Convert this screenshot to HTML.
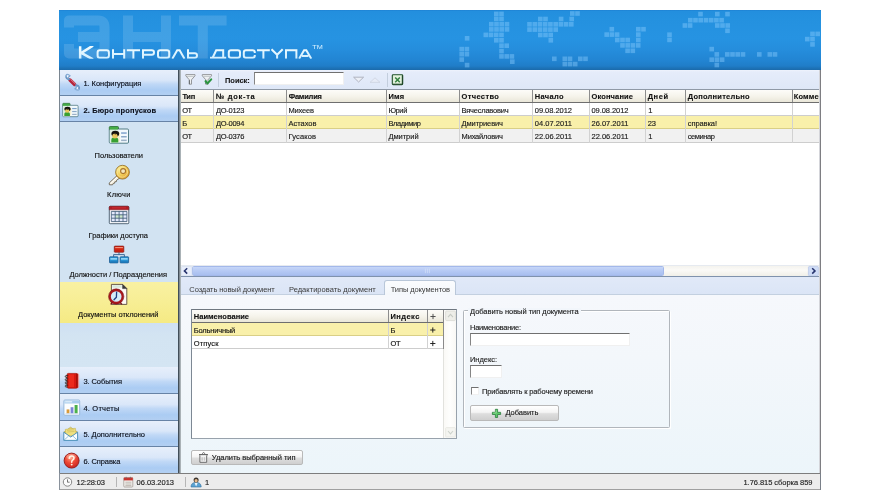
<!DOCTYPE html>
<html lang="ru">
<head>
<meta charset="utf-8">
<title>Контроль доступа</title>
<style>
html,body{margin:0;padding:0;background:#fff;}
body{width:880px;height:500px;overflow:hidden;position:relative;font-family:"Liberation Sans",sans-serif;font-size:7.4px;color:#111;}
.abs{position:absolute;}
#app{position:absolute;left:59px;top:10px;width:762px;height:480px;background:#eef4fb;overflow:hidden;filter:blur(0.4px);}
#hdr{position:absolute;left:0;top:0;width:762px;height:60px;background:linear-gradient(#1e82d3 0px,#238fde 1.5px,#2491df 8px,#2693e2 28px,#258ddc 40px,#2285d3 50px,#207dc8 56px,#1d73b8 58px,#1b6aab 60px);}
#side{position:absolute;left:0;top:60px;width:119px;height:404px;background:#d2e3f2;border-right:1px solid #414e59;}
.nav{position:absolute;left:0;width:119px;height:27px;background:linear-gradient(#e7effb 0%,#dae7f9 40%,#c0d8f6 56%,#abccf3 80%,#b2cff2 100%);border-bottom:1px solid #6783a6;box-sizing:border-box;}
.t{position:absolute;white-space:nowrap;line-height:10px;height:10px;-webkit-text-stroke:0.14px currentColor;}
.b{font-weight:bold;-webkit-text-stroke:0.12px currentColor;}
.c{text-align:center;}
#main{position:absolute;left:120px;top:60px;width:642px;height:404px;background:#fff;border-left:1px solid #808a92;box-sizing:border-box;overflow:hidden;}
#tb{position:absolute;left:0;top:0;width:641px;height:20px;background:linear-gradient(#eef3fc 0,#e5ecfa 2px,#dee7f7 100%);}
#ghead{position:absolute;left:0;top:19px;width:641px;height:14px;background:linear-gradient(#fdfcf9,#f5f3ea 55%,#e9e6d8);border-top:1px solid #8f99a6;border-bottom:1px solid #6e6e6e;box-sizing:border-box;}
.row{position:absolute;left:0;width:641px;border-bottom:1px solid #cfcfcf;box-sizing:border-box;}
.vs{position:absolute;width:1px;background:#d2d2d2;}
.vh{position:absolute;width:1px;background:#8d8d8d;}
#status{position:absolute;left:0;top:463px;width:762px;height:17px;background:#ececec;border-top:1px solid #7d7d7d;border-bottom:1px solid #a0a0a0;box-sizing:border-box;}
.btn{position:absolute;box-sizing:border-box;border:1px solid #b9b9b9;border-radius:2px;background:linear-gradient(#ffffff,#f4f4f4 45%,#dedede 55%,#cfcfcf);}
.inp{position:absolute;box-sizing:border-box;background:#fff;border:1px solid #f0f0f0;border-top:1.5px solid #707070;border-left:1px solid #858585;}
</style>
</head>
<body>
<div id="app">
<div id="hdr">
<svg class="abs" style="left:0;top:0" width="762" height="60" viewBox="0 0 762 60">
<g stroke="#ffffff" opacity="0.13" stroke-width="10" fill="none" stroke-linejoin="round" stroke-linecap="butt">
<path d="M10,17.5 L10,10.4 L39,10.4 Q45.5,10.4 45.5,17 L45.5,37 Q45.5,43.4 39,43.4 L10,43.4 L10,34"/>
<path d="M19,27 L45,27"/>
<path d="M69,5.4 L69,48.4 M107,5.4 L107,48.4 M69,27 L107,27"/>
<path d="M120,10.4 L167.6,10.4 M143.8,10.4 L143.8,48.4"/>
</g>
<g fill="#8fd0ff" fill-opacity="0.42">
<rect x="405.8" y="26.0" width="4.6" height="4.6"/>
<rect x="400.4" y="36.8" width="4.6" height="4.6"/>
<rect x="405.6" y="36.8" width="4.6" height="4.6"/>
<rect x="400.4" y="41.9" width="4.6" height="4.6"/>
<rect x="405.6" y="41.9" width="4.6" height="4.6"/>
<rect x="400.4" y="47.3" width="4.6" height="4.6"/>
<rect x="405.8" y="52.8" width="4.6" height="4.6"/>
<rect x="435.0" y="1.6" width="4.6" height="4.6"/>
<rect x="440.2" y="1.6" width="4.6" height="4.6"/>
<rect x="435.0" y="6.6" width="4.6" height="4.6"/>
<rect x="440.2" y="6.6" width="4.6" height="4.6"/>
<rect x="430.0" y="11.9" width="4.6" height="4.6"/>
<rect x="435.2" y="11.9" width="4.6" height="4.6"/>
<rect x="440.4" y="11.9" width="4.6" height="4.6"/>
<rect x="445.7" y="11.9" width="4.6" height="4.6"/>
<rect x="430.0" y="17.1" width="4.6" height="4.6"/>
<rect x="435.2" y="17.1" width="4.6" height="4.6"/>
<rect x="440.4" y="17.1" width="4.6" height="4.6"/>
<rect x="445.7" y="17.1" width="4.6" height="4.6"/>
<rect x="424.5" y="22.6" width="4.6" height="4.6"/>
<rect x="429.7" y="22.6" width="4.6" height="4.6"/>
<rect x="434.9" y="22.6" width="4.6" height="4.6"/>
<rect x="440.2" y="22.6" width="4.6" height="4.6"/>
<rect x="435.0" y="28.0" width="4.6" height="4.6"/>
<rect x="440.2" y="28.0" width="4.6" height="4.6"/>
<rect x="440.2" y="33.4" width="4.6" height="4.6"/>
<rect x="445.4" y="33.4" width="4.6" height="4.6"/>
<rect x="440.2" y="38.8" width="4.6" height="4.6"/>
<rect x="440.2" y="44.1" width="4.6" height="4.6"/>
<rect x="445.4" y="44.1" width="4.6" height="4.6"/>
<rect x="450.6" y="44.1" width="4.6" height="4.6"/>
<rect x="451.0" y="49.4" width="4.6" height="4.6"/>
<rect x="511.0" y="1.2" width="4.6" height="4.6"/>
<rect x="516.2" y="1.2" width="4.6" height="4.6"/>
<rect x="479.0" y="6.7" width="4.6" height="4.6"/>
<rect x="484.2" y="6.7" width="4.6" height="4.6"/>
<rect x="499.8" y="6.7" width="4.6" height="4.6"/>
<rect x="510.4" y="6.7" width="4.6" height="4.6"/>
<rect x="468.2" y="12.0" width="4.6" height="4.6"/>
<rect x="473.5" y="12.0" width="4.6" height="4.6"/>
<rect x="478.7" y="12.0" width="4.6" height="4.6"/>
<rect x="483.9" y="12.0" width="4.6" height="4.6"/>
<rect x="489.1" y="12.0" width="4.6" height="4.6"/>
<rect x="494.4" y="12.0" width="4.6" height="4.6"/>
<rect x="499.6" y="12.0" width="4.6" height="4.6"/>
<rect x="504.8" y="12.0" width="4.6" height="4.6"/>
<rect x="510.0" y="12.0" width="4.6" height="4.6"/>
<rect x="468.2" y="17.3" width="4.6" height="4.6"/>
<rect x="473.5" y="17.3" width="4.6" height="4.6"/>
<rect x="478.7" y="17.3" width="4.6" height="4.6"/>
<rect x="483.9" y="17.3" width="4.6" height="4.6"/>
<rect x="489.1" y="17.3" width="4.6" height="4.6"/>
<rect x="494.4" y="17.3" width="4.6" height="4.6"/>
<rect x="479.0" y="22.7" width="4.6" height="4.6"/>
<rect x="484.2" y="22.7" width="4.6" height="4.6"/>
<rect x="489.4" y="22.7" width="4.6" height="4.6"/>
<rect x="489.5" y="28.0" width="4.6" height="4.6"/>
<rect x="493.0" y="46.5" width="4.6" height="4.6"/>
<rect x="503.5" y="46.5" width="4.6" height="4.6"/>
<rect x="508.7" y="46.5" width="4.6" height="4.6"/>
<rect x="519.0" y="46.5" width="4.6" height="4.6"/>
<rect x="524.2" y="46.5" width="4.6" height="4.6"/>
<rect x="503.5" y="51.8" width="4.6" height="4.6"/>
<rect x="508.7" y="51.8" width="4.6" height="4.6"/>
<rect x="513.9" y="51.8" width="4.6" height="4.6"/>
<rect x="550.5" y="16.9" width="4.6" height="4.6"/>
<rect x="577.0" y="16.9" width="4.6" height="4.6"/>
<rect x="582.2" y="16.9" width="4.6" height="4.6"/>
<rect x="545.4" y="22.3" width="4.6" height="4.6"/>
<rect x="550.6" y="22.3" width="4.6" height="4.6"/>
<rect x="555.8" y="22.3" width="4.6" height="4.6"/>
<rect x="577.0" y="22.3" width="4.6" height="4.6"/>
<rect x="556.0" y="27.7" width="4.6" height="4.6"/>
<rect x="561.2" y="27.7" width="4.6" height="4.6"/>
<rect x="566.4" y="27.7" width="4.6" height="4.6"/>
<rect x="577.0" y="27.7" width="4.6" height="4.6"/>
<rect x="561.2" y="33.1" width="4.6" height="4.6"/>
<rect x="566.4" y="33.1" width="4.6" height="4.6"/>
<rect x="571.6" y="33.1" width="4.6" height="4.6"/>
<rect x="576.9" y="33.1" width="4.6" height="4.6"/>
<rect x="566.3" y="38.5" width="4.6" height="4.6"/>
<rect x="571.5" y="38.5" width="4.6" height="4.6"/>
<rect x="608.2" y="22.4" width="4.6" height="4.6"/>
<rect x="608.2" y="27.6" width="4.6" height="4.6"/>
<rect x="639.2" y="1.8" width="4.6" height="4.6"/>
<rect x="656.0" y="1.8" width="4.6" height="4.6"/>
<rect x="666.2" y="1.8" width="4.6" height="4.6"/>
<rect x="629.0" y="7.9" width="4.6" height="4.6"/>
<rect x="634.2" y="7.9" width="4.6" height="4.6"/>
<rect x="639.4" y="7.9" width="4.6" height="4.6"/>
<rect x="644.7" y="7.9" width="4.6" height="4.6"/>
<rect x="649.9" y="7.9" width="4.6" height="4.6"/>
<rect x="655.1" y="7.9" width="4.6" height="4.6"/>
<rect x="660.3" y="7.9" width="4.6" height="4.6"/>
<rect x="623.6" y="13.2" width="4.6" height="4.6"/>
<rect x="628.8" y="13.2" width="4.6" height="4.6"/>
<rect x="656.0" y="13.2" width="4.6" height="4.6"/>
<rect x="661.2" y="13.2" width="4.6" height="4.6"/>
<rect x="666.4" y="13.2" width="4.6" height="4.6"/>
<rect x="666.2" y="18.5" width="4.6" height="4.6"/>
<rect x="650.4" y="36.8" width="4.6" height="4.6"/>
<rect x="655.5" y="42.1" width="4.6" height="4.6"/>
<rect x="666.0" y="42.1" width="4.6" height="4.6"/>
<rect x="671.2" y="42.1" width="4.6" height="4.6"/>
<rect x="676.4" y="42.1" width="4.6" height="4.6"/>
<rect x="681.7" y="42.1" width="4.6" height="4.6"/>
<rect x="698.0" y="42.1" width="4.6" height="4.6"/>
<rect x="708.5" y="42.1" width="4.6" height="4.6"/>
<rect x="713.7" y="42.1" width="4.6" height="4.6"/>
<rect x="650.4" y="47.4" width="4.6" height="4.6"/>
<rect x="655.6" y="47.4" width="4.6" height="4.6"/>
<rect x="660.8" y="47.4" width="4.6" height="4.6"/>
<rect x="655.5" y="52.7" width="4.6" height="4.6"/>
<rect x="751.2" y="21.6" width="4.6" height="4.6"/>
<rect x="756.4" y="21.6" width="4.6" height="4.6"/>
<rect x="746.0" y="26.8" width="4.6" height="4.6"/>
<rect x="751.2" y="26.8" width="4.6" height="4.6"/>
<rect x="751.2" y="32.1" width="4.6" height="4.6"/>
</g>
<defs><linearGradient id="tg" x1="0" y1="36" x2="0" y2="49" gradientUnits="userSpaceOnUse"><stop offset="0" stop-color="#f4fdff"/><stop offset="1" stop-color="#cfeeff"/></linearGradient></defs>
<clipPath id="tc"><rect x="0" y="36.1" width="340" height="12.75"/></clipPath>
<g fill="none" stroke="url(#tg)" stroke-linejoin="miter" stroke-linecap="butt" clip-path="url(#tc)">
<path stroke-width="2.5" d="M21.15,36.20 L21.15,48.80 M33.95,35.60 L22.35,42.90 L33.95,49.40"/>
<path stroke-width="2.0" d="M40.80,40.20 L47.70,40.20 Q49.90,40.20 49.90,42.40 L49.90,45.60 Q49.90,47.80 47.70,47.80 L40.80,47.80 Q38.60,47.80 38.60,45.60 L38.60,42.40 Q38.60,40.20 40.80,40.20 Z"/>
<path stroke-width="2.0" d="M54.00,39.20 L54.00,48.80 M65.20,39.20 L65.20,48.80 M54.00,44.00 L65.20,44.00"/>
<path stroke-width="2.0" d="M67.80,40.20 L81.00,40.20 M74.40,40.20 L74.40,48.80"/>
<path stroke-width="2.0" d="M84.00,48.80 L84.00,40.20 L92.80,40.20 Q95.00,40.20 95.00,42.40 L95.00,42.60 Q95.00,44.80 92.80,44.80 L84.00,44.80"/>
<path stroke-width="2.0" d="M101.20,40.20 L108.00,40.20 Q110.20,40.20 110.20,42.40 L110.20,45.60 Q110.20,47.80 108.00,47.80 L101.20,47.80 Q99.00,47.80 99.00,45.60 L99.00,42.40 Q99.00,40.20 101.20,40.20 Z"/>
<path stroke-width="2.0" d="M113.30,48.80 L118.20,40.20 L120.60,40.20 L125.50,48.80"/>
<path stroke-width="2.0" d="M129.00,39.20 L129.00,47.80 L135.80,47.80 Q138.00,47.80 138.00,45.60 L138.00,45.40 Q138.00,43.20 135.80,43.20 L129.00,43.20"/>
<path stroke-width="2.0" d="M151.00,47.80 L167.20,47.80 M153.60,47.80 L157.20,40.20 L164.20,40.20 L164.20,47.80"/>
<path stroke-width="2.0" d="M172.00,40.20 L178.80,40.20 Q181.00,40.20 181.00,42.40 L181.00,45.60 Q181.00,47.80 178.80,47.80 L172.00,47.80 Q169.80,47.80 169.80,45.60 L169.80,42.40 Q169.80,40.20 172.00,40.20 Z"/>
<path stroke-width="2.0" d="M195.80,43.00 L195.80,42.40 Q195.80,40.20 193.60,40.20 L187.00,40.20 Q184.80,40.20 184.80,42.40 L184.80,45.60 Q184.80,47.80 187.00,47.80 L193.60,47.80 Q195.80,47.80 195.80,45.60 L195.80,45.00"/>
<path stroke-width="2.0" d="M198.00,40.20 L210.80,40.20 M204.40,40.20 L204.40,48.80"/>
<path stroke-width="2.0" d="M212.50,39.20 L218.10,44.80 L223.70,39.20 M218.10,44.80 L218.10,48.80"/>
<path stroke-width="2.0" d="M227.00,48.80 L227.00,40.20 L237.40,40.20 L237.40,48.80"/>
<path stroke-width="2.0" d="M240.10,48.80 L245.10,40.20 L247.30,40.20 L252.30,48.80 M243.00,45.90 L249.40,45.90"/>
</g>
<text x="253.2" y="39.2" font-family="Liberation Sans, sans-serif" font-size="5.6" fill="#d8f1ff" textLength="10.5" lengthAdjust="spacingAndGlyphs">TM</text>
</svg>
</div>
<div id="side">
<div class="nav" style="top:0px;height:26px"></div>
<div class="t" style="left:24.40px;top:9px;font-size:7.5px;letter-spacing:-0.046px;color:#0b101c;">1. Конфигурация</div>
<svg class="abs" style="left:3.00px;top:2.00px" width="20" height="20" viewBox="62 72 20 20"><g stroke-linecap="round" fill="none"><path d="M68.6,78.6 L76.4,86.2" stroke="#8db0d6" stroke-width="2.0"/><path d="M70.0,80.0 L74.6,84.4" stroke="#b5243a" stroke-width="3.5"/><path d="M70.8,79.6 L75.2,83.8" stroke="#e58a96" stroke-width="0.9"/><path d="M69.8,75.8 L67.8,77.6 L66.0,75.8 A2.9,2.9 0 0 0 69.4,79.4" stroke="#6694c4" stroke-width="1.3" stroke-linejoin="round"/><path d="M66.4,74.6 A2.9,2.9 0 0 1 69.8,75.8" stroke="#88add6" stroke-width="1.2"/><path d="M75.2,88.8 L77.2,87.0 L79.2,89.0 A2.9,2.9 0 0 0 75.6,85.2" stroke="#6694c4" stroke-width="1.3" stroke-linejoin="round"/><path d="M78.6,90 A2.9,2.9 0 0 1 75.2,88.8" stroke="#88add6" stroke-width="1.2"/><circle cx="67.6" cy="76.6" r="0.9" fill="#f4f8fd" stroke="none"/><circle cx="77.4" cy="88.0" r="0.9" fill="#f4f8fd" stroke="none"/></g></svg>
<div class="nav" style="top:26px;height:26px"></div>
<div class="t b" style="left:24.40px;top:36px;font-size:7.5px;letter-spacing:0.137px;color:#0b101c;">2. Бюро пропусков</div>
<svg class="abs" style="left:1.00px;top:31.00px" width="22" height="18" viewBox="60 101 22 18"><rect x="62.72" y="103.32" width="7.36" height="3.36" fill="#46ac46" rx="0.72" stroke="#2a6e34" stroke-width="0.64"/><rect x="62.72" y="105.32" width="15.36" height="11.36" fill="#f2f9fd" rx="0.88" stroke="#2d5f68" stroke-width="0.64"/><rect x="63.12" y="104.28" width="6.56" height="1.76" fill="#46ac46" /><rect x="63.12" y="105.88" width="6.88" height="10.40" fill="#dfeee0" /><rect x="69.28" y="107.80" width="2.08" height="7.68" fill="#f6efcf" rx="0.96"/><path d="M64.32,116.12 l0,-2.08 q0,-2.08 2.80,-2.08 q2.80,0 2.80,2.08 l0,2.08 z" fill="#38a032"/><ellipse cx="67.52" cy="109.08" rx="3.12" ry="2.32" fill="#15120e"/><ellipse cx="67.20" cy="110.84" rx="2.16" ry="2.00" fill="#e9c65c"/><path d="M65.28,109.80 q1.12,-1.28 2.08,0 q1.04,-1.12 2.24,0.32 l0,-1.28 l-4.32,0 z" fill="#15120e"/><rect x="72.16" y="107.96" width="4.48" height="1.20" fill="#7fa3cc" /><rect x="72.16" y="110.92" width="4.48" height="1.20" fill="#8aa8c8" /><rect x="72.16" y="113.80" width="4.48" height="1.20" fill="#9cb0c6" /></svg>
<div class="nav" style="top:297px;height:27px"></div>
<div class="t" style="left:24.40px;top:307px;font-size:7.5px;letter-spacing:-0.078px;color:#0b101c;">3. События</div>
<svg class="abs" style="left:4.00px;top:301.00px" width="19" height="20" viewBox="63 371 19 20"><rect x="67.4" y="373.4" width="11.8" height="14.8" rx="1.4" fill="#f08c84" opacity="0.75"/><rect x="67.0" y="373.4" width="10.6" height="14.8" rx="1.4" fill="#d81810" stroke="#a01008" stroke-width="0.6"/><rect x="68.6" y="374.4" width="5.4" height="12.8" fill="#f23020" opacity="0.75"/><rect x="76.0" y="373.8" width="1.6" height="14" fill="#a81008"/><path d="M68.2,375.6 L65.8,375.6 A1,1 0 0 0 65.8,377.40000000000003 L67.4,377.40000000000003" stroke="#2a2a2a" stroke-width="0.9" fill="none"/><path d="M68.2,378.8 L65.8,378.8 A1,1 0 0 0 65.8,380.6 L67.4,380.6" stroke="#2a2a2a" stroke-width="0.9" fill="none"/><path d="M68.2,382.0 L65.8,382.0 A1,1 0 0 0 65.8,383.8 L67.4,383.8" stroke="#2a2a2a" stroke-width="0.9" fill="none"/><path d="M68.2,385.2 L65.8,385.2 A1,1 0 0 0 65.8,387.0 L67.4,387.0" stroke="#2a2a2a" stroke-width="0.9" fill="none"/></svg>
<div class="nav" style="top:324px;height:27px"></div>
<div class="t" style="left:24.40px;top:334px;font-size:7.5px;letter-spacing:0.206px;color:#0b101c;">4. Отчеты</div>
<svg class="abs" style="left:3.00px;top:328.00px" width="20" height="20" viewBox="62 398 20 20"><rect x="63.9" y="400" width="15.8" height="15.2" rx="1" fill="#fbfdff" stroke="#8fb2d6" stroke-width="0.9"/><rect x="64.4" y="400.5" width="14.8" height="3" fill="#a9cdee"/><rect x="65.2" y="401.2" width="7" height="1.2" fill="#e4f1fb"/><rect x="66.6" y="409.4" width="2.8" height="4" fill="#d89a3a"/><rect x="70.6" y="407.2" width="2.8" height="6.2" fill="#7a86d8"/><rect x="74.6" y="405" width="3" height="8.4" fill="#4bb04a"/><rect x="65.4" y="413.4" width="13" height="0.7" fill="#c5d5e6"/></svg>
<div class="nav" style="top:351px;height:26px"></div>
<div class="t" style="left:24.40px;top:360px;font-size:7.5px;letter-spacing:-0.047px;color:#0b101c;">5. Дополнительно</div>
<svg class="abs" style="left:3.00px;top:355.00px" width="18" height="18" viewBox="62 425 18 18"><path d="M63.8,432.2 L70.6,427.2 L77.6,432.2 Z" fill="#e9d873" stroke="#b9a84a" stroke-width="0.7" stroke-linejoin="round"/><rect x="65.6" y="428.8" width="10.2" height="7" fill="#efe080" stroke="#c2b050" stroke-width="0.5" transform="rotate(-6 70.7 432)"/><path d="M67,430.4 L74.4,429.8 M67.2,432 L74.6,431.4" stroke="#c9b758" stroke-width="0.6"/><path d="M63.8,432.2 L63.8,440.4 L77.6,440.4 L77.6,432.2 L70.7,437 Z" fill="#fafdff" stroke="#3f88b4" stroke-width="0.9" stroke-linejoin="round"/><path d="M63.8,440.4 L68.8,435.8 M77.6,440.4 L72.6,435.8" stroke="#6aa8cc" stroke-width="0.7"/></svg>
<div class="nav" style="top:377px;height:27px"></div>
<div class="t" style="left:24.40px;top:387px;font-size:7.5px;letter-spacing:-0.089px;color:#0b101c;">6. Справка</div>
<svg class="abs" style="left:3.00px;top:381.00px" width="20" height="20" viewBox="62 451 20 20"><defs><radialGradient id="hg" cx="0.42" cy="0.32" r="0.75"><stop offset="0" stop-color="#ff9a7a"/><stop offset="0.45" stop-color="#ee4a38"/><stop offset="1" stop-color="#c41e1c"/></radialGradient></defs><circle cx="71.6" cy="460.6" r="7.5" fill="url(#hg)" stroke="#8e1a18" stroke-width="0.9"/><ellipse cx="71.4" cy="456.6" rx="5" ry="2.8" fill="#ffffff" opacity="0.22"/><path d="M69.3,458.2 Q69.5,456 71.7,456 Q74,456 74,458 Q74,459.4 72.6,460.2 Q71.7,460.8 71.7,462.2" stroke="#fff4e6" stroke-width="1.5" fill="none" stroke-linecap="round"/><circle cx="71.7" cy="464.6" r="0.95" fill="#fff4e6"/></svg>
<div class="abs" style="left:0;top:212px;width:119px;height:41px;background:linear-gradient(#f9f1a2,#f7ee94 50%,#f5ea84)"></div>
<div class="abs" style="left:0;top:253px;width:119px;height:44px;background:linear-gradient(#cfe0f3,#d3e4f2 30%,#d4e5f3)"></div>
<div class="t" style="left:35.60px;top:81px;font-size:7.5px;letter-spacing:-0.050px;">Пользователи</div>
<svg class="abs" style="left:48.00px;top:54.00px" width="24" height="22" viewBox="107 124 24 22"><rect x="109.30" y="126.50" width="9.20" height="4.20" fill="#46ac46" rx="0.90" stroke="#2a6e34" stroke-width="0.80"/><rect x="109.30" y="129.00" width="19.20" height="14.20" fill="#f2f9fd" rx="1.10" stroke="#2d5f68" stroke-width="0.80"/><rect x="109.80" y="127.70" width="8.20" height="2.20" fill="#46ac46" /><rect x="109.80" y="129.70" width="8.60" height="13.00" fill="#dfeee0" /><rect x="117.50" y="132.10" width="2.60" height="9.60" fill="#f6efcf" rx="1.20"/><path d="M111.30,142.50 l0,-2.60 q0,-2.60 3.50,-2.60 q3.50,0 3.50,2.60 l0,2.60 z" fill="#38a032"/><ellipse cx="115.30" cy="133.70" rx="3.90" ry="2.90" fill="#15120e"/><ellipse cx="114.90" cy="135.90" rx="2.70" ry="2.50" fill="#e9c65c"/><path d="M112.50,134.60 q1.40,-1.60 2.60,0 q1.30,-1.40 2.80,0.40 l0,-1.60 l-5.40,0 z" fill="#15120e"/><rect x="121.10" y="132.30" width="5.60" height="1.50" fill="#7fa3cc" /><rect x="121.10" y="136.00" width="5.60" height="1.50" fill="#8aa8c8" /><rect x="121.10" y="139.60" width="5.60" height="1.50" fill="#9cb0c6" /></svg>
<div class="t" style="left:48.00px;top:120px;font-size:7.5px;letter-spacing:0.275px;">Ключи</div>
<svg class="abs" style="left:47.00px;top:93.00px" width="27" height="25" viewBox="106 163 27 25"><defs><radialGradient id="kg" cx="0.32" cy="0.3" r="0.8"><stop offset="0" stop-color="#fbee96"/><stop offset="0.5" stop-color="#f2cc58"/><stop offset="1" stop-color="#d9962a"/></radialGradient></defs><path d="M117.0,175.6 L109.2,183.0 L109.4,184.8 L112.6,184.8 L113.2,183.4 L114.6,183.2 L114.8,181.8 L116.4,181.6 L116.6,180.2 L120.4,177.6 Z" fill="#f6f1e2" stroke="#5c5240" stroke-width="0.8" stroke-linejoin="round"/><path d="M110.4,183.4 L117.6,176.6" stroke="#ffffff" stroke-width="0.9"/><circle cx="122.5" cy="172.2" r="6.9" fill="url(#kg)" stroke="#8f6c24" stroke-width="0.8"/><circle cx="122.3" cy="172.0" r="5.2" fill="none" stroke="#fbe9a0" stroke-width="1.0" opacity="0.7"/><circle cx="123.1" cy="171.1" r="2.5" fill="#f3e6bd" stroke="#a9752c" stroke-width="1.1"/></svg>
<div class="t" style="left:29.60px;top:161px;font-size:7.5px;letter-spacing:-0.025px;">Графики доступа</div>
<svg class="abs" style="left:48.00px;top:134.00px" width="24" height="22" viewBox="107 204 24 22"><rect x="109.3" y="206.3" width="19.5" height="17.4" rx="0.9" fill="#fdfdff" stroke="#2f4558" stroke-width="0.8"/><path d="M109.3,209.8 L109.3,207.2 Q109.3,206.3 110.2,206.3 L127.9,206.3 Q128.8,206.3 128.8,207.2 L128.8,209.8 Z" fill="#b21c24" stroke="#7e1219" stroke-width="0.5"/><rect x="112" y="207.2" width="14" height="1.2" fill="#cf3038" opacity="0.7"/><rect x="111.3" y="211.4" width="15.6" height="10.2" fill="#e3e8fb"/><rect x="115.2" y="214.8" width="7.8" height="3.4" fill="#cfe8cc"/><path d="M111.3,211.4 L126.9,211.4" stroke="#34506a" stroke-width="0.8"/><path d="M111.3,214.8 L126.9,214.8" stroke="#34506a" stroke-width="0.8"/><path d="M111.3,218.2 L126.9,218.2" stroke="#34506a" stroke-width="0.8"/><path d="M111.3,221.6 L126.9,221.6" stroke="#34506a" stroke-width="0.8"/><path d="M111.3,211.4 L111.3,221.6" stroke="#3d5878" stroke-width="0.8"/><path d="M115.2,211.4 L115.2,221.6" stroke="#3d5878" stroke-width="0.8"/><path d="M119.1,211.4 L119.1,221.6" stroke="#3d5878" stroke-width="0.8"/><path d="M123.0,211.4 L123.0,221.6" stroke="#3d5878" stroke-width="0.8"/><path d="M126.9,211.4 L126.9,221.6" stroke="#3d5878" stroke-width="0.8"/></svg>
<div class="t" style="left:10.40px;top:200px;font-size:7.5px;letter-spacing:-0.060px;">Должности / Подразделения</div>
<svg class="abs" style="left:48.00px;top:174.00px" width="24" height="22" viewBox="107 244 24 22"><path d="M119,252.4 L119,254.6 M113.6,256.8 L113.6,254.6 L124.4,254.6 L124.4,256.8" stroke="#2f5f90" stroke-width="0.9" fill="none"/><rect x="114.3" y="246.1" width="9.5" height="6.1" rx="0.6" fill="#da2a14" stroke="#7c1212" stroke-width="0.7"/><rect x="115.2" y="247" width="7.7" height="1.1" fill="#f39a86" opacity="0.9"/><rect x="115.0" y="249.6" width="8.1" height="2.0" fill="#b81c10" opacity="0.55"/><rect x="109.5" y="256.8" width="8.5" height="6.1" rx="0.6" fill="#2b97d6" stroke="#114e86" stroke-width="0.7"/><rect x="120.1" y="256.8" width="8.5" height="6.1" rx="0.6" fill="#2b97d6" stroke="#114e86" stroke-width="0.7"/><rect x="110.4" y="258.0" width="6.7" height="1.7" fill="#9bdcfa" opacity="0.9"/><rect x="121.0" y="258.0" width="6.7" height="1.7" fill="#9bdcfa" opacity="0.9"/><rect x="110.2" y="260.8" width="7.1" height="1.5" fill="#1a6fb0" opacity="0.6"/><rect x="120.8" y="260.8" width="7.1" height="1.5" fill="#1a6fb0" opacity="0.6"/></svg>
<div class="t" style="left:19.00px;top:240px;font-size:7.5px;letter-spacing:-0.032px;">Документы отклонений</div>
<svg class="abs" style="left:48.00px;top:212.00px" width="22" height="25" viewBox="107 282 22 25"><path d="M111.4,284.4 L122.6,284.4 L126.8,288.6 L126.8,304.4 L111.4,304.4 Z" fill="#fdf9f6" stroke="#5a4a3a" stroke-width="0.9" stroke-linejoin="round"/><path d="M122.6,284.4 L122.6,288.6 L126.8,288.6 Z" fill="#3a3a3a" stroke="#3a3a3a" stroke-width="0.6"/><rect x="112.4" y="285.2" width="9.4" height="2.6" fill="#d9eadb"/><path d="M110.6,304.4 L113,302 M122,304.4 L119.6,302" stroke="#7a1014" stroke-width="1.3"/><circle cx="116.2" cy="296.5" r="6.5" fill="#d3ebf8" stroke="#a8181c" stroke-width="2.3"/><circle cx="116.2" cy="296.5" r="7.7" fill="none" stroke="#6e0e12" stroke-width="0.5"/><path d="M116.6,292.2 L116.4,297.2 L114.0,299.8" stroke="#1f3f86" stroke-width="1.3" fill="none" stroke-linecap="round" stroke-linejoin="round"/></svg>
<div class="abs" style="left:0;top:0;width:1px;height:404px;background:#7a8691"></div>
</div>
<div id="main">
<div id="tb"></div>
<svg class="abs" style="left:4.00px;top:2.00px" width="14" height="15" viewBox="184 72 14 15"><path d="M185.8,74.6 L195.0,74.6 L195.0,75.8 L191.5,79.8 L191.5,84.2 L189.3,84.2 L189.3,79.8 L185.8,75.8 Z" fill="#eef0f2" stroke="#8c8f92" stroke-width="0.9" stroke-linejoin="round"/><path d="M187.0,76.4 L193.8,76.4" stroke="#b8bcc0" stroke-width="0.8"/><path d="M189.4,80.2 L189.4,84.2" stroke="#5f6366" stroke-width="0.9"/></svg>
<svg class="abs" style="left:20.00px;top:2.00px" width="15" height="15" viewBox="200 72 15 15"><path d="M202.3,74.6 L211.5,74.6 L211.5,75.8 L208.0,79.8 L208.0,84.2 L205.8,84.2 L205.8,79.8 L202.3,75.8 Z" fill="#eef0f2" stroke="#8c8f92" stroke-width="0.9" stroke-linejoin="round"/><path d="M203.5,76.4 L210.3,76.4" stroke="#b8bcc0" stroke-width="0.8"/><path d="M205.9,80.2 L205.9,84.2" stroke="#5f6366" stroke-width="0.9"/><path d="M205.6,81.2 L207.6,83.4 L211.2,79.4" stroke="#2f9e45" stroke-width="2.1" fill="none" stroke-linecap="round" stroke-linejoin="round"/><path d="M205.6,81.2 L207.6,83.4 L211.2,79.4" stroke="#1d6e30" stroke-width="0.6" fill="none" opacity="0.6"/></svg>
<div class="abs" style="left:38.30000000000001px;top:3px;width:1px;height:14px;background:#c3cedd"></div>
<div class="t b" style="left:45.00px;top:6px;font-size:7.5px;letter-spacing:-0.040px;color:#1b1b1b;">Поиск:</div>
<div class="inp" style="left:74px;top:2px;width:90px;height:13px"></div>
<svg class="abs" style="left:172.00px;top:5.00px" width="30" height="10" viewBox="352 75 30 10"><path d="M353.6,77.2 L363.6,77.2 L358.6,82 Z" fill="#eceff6" stroke="#a9adba" stroke-width="0.9" stroke-linejoin="round"/><path d="M370,82.4 L380,82.4 L375,77.8 Z" fill="#e6ebf6" stroke="#cdd3e0" stroke-width="0.8" stroke-linejoin="round"/></svg>
<div class="abs" style="left:207px;top:3px;width:1px;height:14px;background:#c3cedd"></div>
<svg class="abs" style="left:210.00px;top:3.00px" width="15" height="14" viewBox="390 73 15 14"><rect x="392.3" y="74.7" width="10.4" height="10" rx="0.9" fill="#cfe8cc" stroke="#21502a" stroke-width="1.1"/><rect x="393.3" y="75.7" width="8.4" height="8" fill="#e4f3de"/><path d="M393,84.2 L402.2,84.2 M402.3,75.4 L402.3,84.4" stroke="#173c1e" stroke-width="0.9"/><path d="M395.2,77.4 L399.8,82.2 M399.8,77.4 L395.2,82.2" stroke="#34803f" stroke-width="1.5" stroke-linecap="butt"/></svg>
<div class="row" style="top:32px;height:14px;background:#ffffff;border-bottom-color:#cdcdcd"></div>
<div class="row" style="top:46px;height:13px;background:#f9f0aa;border-bottom-color:#d9cf86"></div>
<div class="row" style="top:59px;height:14px;background:#f1f1f1;border-bottom-color:#cdcdcd"></div>
<div id="ghead"></div>
<div class="vh" style="left:32.5px;top:20px;height:12px"></div>
<div class="vs" style="left:32.5px;top:33px;height:40px"></div>
<div class="vh" style="left:105.5px;top:20px;height:12px"></div>
<div class="vs" style="left:105.5px;top:33px;height:40px"></div>
<div class="vh" style="left:205.5px;top:20px;height:12px"></div>
<div class="vs" style="left:205.5px;top:33px;height:40px"></div>
<div class="vh" style="left:279.0px;top:20px;height:12px"></div>
<div class="vs" style="left:279.0px;top:33px;height:40px"></div>
<div class="vh" style="left:351.5px;top:20px;height:12px"></div>
<div class="vs" style="left:351.5px;top:33px;height:40px"></div>
<div class="vh" style="left:408.5px;top:20px;height:12px"></div>
<div class="vs" style="left:408.5px;top:33px;height:40px"></div>
<div class="vh" style="left:464.5px;top:20px;height:12px"></div>
<div class="vs" style="left:464.5px;top:33px;height:40px"></div>
<div class="vh" style="left:504.5px;top:20px;height:12px"></div>
<div class="vs" style="left:504.5px;top:33px;height:40px"></div>
<div class="vh" style="left:611.5px;top:20px;height:12px"></div>
<div class="vs" style="left:611.5px;top:33px;height:40px"></div>
<div class="t b" style="left:2.40px;top:22px;font-size:7.5px;letter-spacing:-0.325px;color:#111;">Тип</div>
<div class="t b" style="left:36.00px;top:22px;font-size:7.5px;letter-spacing:0.693px;color:#111;">№ док-та</div>
<div class="t b" style="left:108.70px;top:22px;font-size:7.5px;letter-spacing:-0.200px;color:#111;">Фамилия</div>
<div class="t b" style="left:208.40px;top:22px;font-size:7.5px;letter-spacing:0.150px;color:#111;">Имя</div>
<div class="t b" style="left:281.60px;top:22px;font-size:7.5px;letter-spacing:0.336px;color:#111;">Отчество</div>
<div class="t b" style="left:354.80px;top:22px;font-size:7.5px;letter-spacing:0.310px;color:#111;">Начало</div>
<div class="t b" style="left:411.50px;top:22px;font-size:7.5px;letter-spacing:0.131px;color:#111;">Окончание</div>
<div class="t b" style="left:467.70px;top:22px;font-size:7.5px;letter-spacing:0.550px;color:#111;">Дней</div>
<div class="t b" style="left:507.80px;top:22px;font-size:7.5px;letter-spacing:0.217px;color:#111;">Дополнительно</div>
<div class="t b" style="left:613.80px;top:22px;font-size:7.5px;letter-spacing:0.113px;color:#111;">Комме</div>
<div class="t" style="left:2.20px;top:36px;font-size:7.5px;letter-spacing:-0.550px;color:#1a1a1a;">ОТ</div>
<div class="t" style="left:36.00px;top:36px;font-size:7.5px;letter-spacing:-0.283px;color:#1a1a1a;">ДО-0123</div>
<div class="t" style="left:108.50px;top:36px;font-size:7.5px;letter-spacing:-0.190px;color:#1a1a1a;">Михеев</div>
<div class="t" style="left:208.40px;top:36px;font-size:7.5px;letter-spacing:-0.383px;color:#1a1a1a;">Юрий</div>
<div class="t" style="left:281.60px;top:36px;font-size:7.5px;letter-spacing:-0.227px;color:#1a1a1a;">Вячеславович</div>
<div class="t" style="left:354.80px;top:36px;font-size:7.5px;letter-spacing:-0.039px;color:#1a1a1a;">09.08.2012</div>
<div class="t" style="left:411.50px;top:36px;font-size:7.5px;letter-spacing:-0.061px;color:#1a1a1a;">09.08.2012</div>
<div class="t" style="left:468.30px;top:36px;font-size:7.5px;color:#1a1a1a;">1</div>
<div class="t" style="left:2.20px;top:49px;font-size:7.5px;color:#1a1a1a;">Б</div>
<div class="t" style="left:36.00px;top:49px;font-size:7.5px;letter-spacing:-0.283px;color:#1a1a1a;">ДО-0094</div>
<div class="t" style="left:108.50px;top:49px;font-size:7.5px;letter-spacing:-0.033px;color:#1a1a1a;">Астахов</div>
<div class="t" style="left:208.40px;top:49px;font-size:7.5px;letter-spacing:-0.436px;color:#1a1a1a;">Владимир</div>
<div class="t" style="left:281.60px;top:49px;font-size:7.5px;letter-spacing:-0.122px;color:#1a1a1a;">Дмитриевич</div>
<div class="t" style="left:354.80px;top:49px;font-size:7.5px;letter-spacing:0.022px;color:#1a1a1a;">04.07.2011</div>
<div class="t" style="left:411.50px;top:49px;font-size:7.5px;letter-spacing:0.000px;color:#1a1a1a;">26.07.2011</div>
<div class="t" style="left:467.70px;top:49px;font-size:7.5px;letter-spacing:-0.050px;color:#1a1a1a;">23</div>
<div class="t" style="left:507.80px;top:49px;font-size:7.5px;letter-spacing:-0.093px;color:#1a1a1a;">справка!</div>
<div class="t" style="left:2.20px;top:62px;font-size:7.5px;letter-spacing:-0.550px;color:#1a1a1a;">ОТ</div>
<div class="t" style="left:36.00px;top:62px;font-size:7.5px;letter-spacing:-0.283px;color:#1a1a1a;">ДО-0376</div>
<div class="t" style="left:108.50px;top:62px;font-size:7.5px;letter-spacing:0.142px;color:#1a1a1a;">Гусаков</div>
<div class="t" style="left:208.40px;top:62px;font-size:7.5px;letter-spacing:-0.033px;color:#1a1a1a;">Дмитрий</div>
<div class="t" style="left:281.60px;top:62px;font-size:7.5px;letter-spacing:-0.200px;color:#1a1a1a;">Михайлович</div>
<div class="t" style="left:354.80px;top:62px;font-size:7.5px;letter-spacing:0.022px;color:#1a1a1a;">22.06.2011</div>
<div class="t" style="left:411.50px;top:62px;font-size:7.5px;letter-spacing:0.000px;color:#1a1a1a;">22.06.2011</div>
<div class="t" style="left:468.30px;top:62px;font-size:7.5px;color:#1a1a1a;">1</div>
<div class="t" style="left:507.80px;top:62px;font-size:7.5px;letter-spacing:-0.425px;color:#1a1a1a;">семинар</div>
<div class="abs" style="left:0;top:195px;width:641px;height:1px;background:#e6eaf0"></div>
<div class="abs" style="left:0;top:196px;width:641px;height:10px;background:linear-gradient(#f4f3ee,#fbfaf7 40%,#f0efe8)"></div>
<div class="abs" style="left:12px;top:196px;width:471.5px;height:10px;background:linear-gradient(#c6d6f8,#b5c9f4 50%,#a8bfef);border:1px solid #a3b8ea;border-radius:1.5px;box-sizing:border-box"></div>
<svg class="abs" style="left:0.00px;top:195.00px" width="640" height="12" viewBox="180 265 640 12"><rect x="181.4" y="266.4" width="10.6" height="9.4" rx="1.2" fill="#e8eefb" stroke="#c9d6ee" stroke-width="0.6"/><path d="M187.2,268.2 L184.4,270.9 L187.2,273.6" stroke="#27346e" stroke-width="1.5" fill="none"/><rect x="808.4" y="266.4" width="10" height="9.4" rx="1.2" fill="#cfdcf6" stroke="#aebfe6" stroke-width="0.6"/><path d="M812.2,268.2 L815,270.9 L812.2,273.6" stroke="#27346e" stroke-width="1.5" fill="none"/><path d="M425.4,268.6 L425.4,273.2 M427.4,268.6 L427.4,273.2 M429.4,268.6 L429.4,273.2" stroke="#d9e4f8" stroke-width="0.6"/></svg>
<div class="abs" style="left:0;top:206px;width:641px;height:18px;background:linear-gradient(#e1e9f8,#dbe5f6);border-top:1px solid #7f92ad;box-sizing:border-box"></div>
<div class="abs" style="left:0;top:224px;width:641px;height:180px;background:linear-gradient(#f6f8fc 0,#f3f7fb 35%,#ecf5fa 100%);border-top:1px solid #c3d0e0;box-sizing:border-box"></div>
<div class="abs" style="left:204px;top:210px;width:71.5px;height:15px;background:linear-gradient(#fbfcfe,#f4f7fb);border:1px solid #b9c7d9;border-bottom:none;border-radius:3px 3px 0 0;box-sizing:border-box"></div>
<div class="t" style="left:9.30px;top:215px;font-size:7.5px;letter-spacing:-0.074px;color:#3a3a3a;-webkit-text-stroke:0;">Создать новый документ</div>
<div class="t" style="left:109.00px;top:215px;font-size:7.5px;letter-spacing:0.019px;color:#3a3a3a;-webkit-text-stroke:0;">Редактировать документ</div>
<div class="t" style="left:210.70px;top:215px;font-size:7.5px;letter-spacing:-0.089px;color:#3a3a3a;-webkit-text-stroke:0;">Типы документов</div>
<div class="abs" style="left:11px;top:239px;width:266px;height:130px;background:#fff;border:1px solid #98a2ac;border-top-color:#6f7780;border-left-color:#7d8894;box-sizing:border-box"></div>
<div class="abs" style="left:12px;top:240px;width:251px;height:13px;background:linear-gradient(#fdfcf9,#f5f3ea 55%,#e9e6d8);border-bottom:1px solid #6e6e6e;box-sizing:border-box"></div>
<div class="abs" style="left:12px;top:253px;width:251px;height:13px;background:#f9f0aa;border-bottom:1px solid #d9cf86;box-sizing:border-box"></div>
<div class="abs" style="left:12px;top:266px;width:251px;height:13px;background:#fff;border-bottom:1px solid #cdcdcd;box-sizing:border-box"></div>
<div class="vh" style="left:208.0px;top:240px;height:12px"></div>
<div class="vs" style="left:208.0px;top:253px;height:26px"></div>
<div class="vh" style="left:247.0px;top:240px;height:12px"></div>
<div class="vs" style="left:247.0px;top:253px;height:26px"></div>
<div class="abs" style="left:263px;top:240px;width:13px;height:128px;background:linear-gradient(90deg,#faf9f6,#fefefd 50%,#f9f8f5);border-left:1px solid #e2e2de;box-sizing:border-box"></div>
<svg class="abs" style="left:264.00px;top:240.00px" width="13" height="128" viewBox="444 310 13 128"><rect x="445.6" y="311" width="9.8" height="9.6" rx="1" fill="#eeeee9" stroke="#d6d6d0" stroke-width="0.7"/><path d="M448,317.2 L450.5,314.4 L453,317.2" stroke="#c6cac4" stroke-width="1.1" fill="none"/><rect x="445.6" y="427.6" width="9.8" height="9.4" rx="1" fill="#f5f5f1" stroke="#e4e4de" stroke-width="0.7"/><path d="M448,431 L450.5,433.8 L453,431" stroke="#cdd3cc" stroke-width="1.1" fill="none"/></svg>
<svg class="abs" style="left:248.00px;top:242.00px" width="12" height="36" viewBox="428 312 12 36"><path d="M430.4,316.5 L435.6,316.5 M433,313.9 L433,319.1" stroke="#4a4a4a" stroke-width="0.95" fill="none"/><path d="M430.2,330 L435.40000000000003,330 M432.8,327.4 L432.8,332.6" stroke="#1c1c1c" stroke-width="0.95" fill="none"/><path d="M430.2,343.5 L435.40000000000003,343.5 M432.8,340.9 L432.8,346.1" stroke="#1c1c1c" stroke-width="0.95" fill="none"/></svg>
<div class="abs" style="left:263px;top:240px;width:1px;height:39px;background:#8a8a8a"></div>
<div class="t b" style="left:13.80px;top:242px;font-size:7.5px;letter-spacing:0.018px;">Наименование</div>
<div class="t b" style="left:210.50px;top:242px;font-size:7.5px;letter-spacing:0.440px;">Индекс</div>
<div class="t" style="left:13.80px;top:256px;font-size:7.5px;letter-spacing:-0.189px;">Больничный</div>
<div class="t" style="left:210.60px;top:256px;font-size:7.5px;">Б</div>
<div class="t" style="left:13.80px;top:269px;font-size:7.5px;letter-spacing:0.120px;">Отпуск</div>
<div class="t" style="left:210.60px;top:269px;font-size:7.5px;letter-spacing:-0.550px;">ОТ</div>
<div class="btn" style="left:10.8px;top:379.5px;width:111.8px;height:15px"></div>
<svg class="abs" style="left:17.00px;top:381.00px" width="12" height="13" viewBox="197 451 12 13"><path d="M202.2,454.0 L203.6,452.2 L205.0,454.0" stroke="#666" stroke-width="0.8" fill="none" stroke-linejoin="round"/><path d="M199.0,454.7 L207.9,454.7" stroke="#555" stroke-width="1.2"/><path d="M199.9,455.4 L199.9,462.3 L206.7,462.3 L206.7,455.4" fill="#f4f4f4" stroke="#5e5e5e" stroke-width="0.9" stroke-linejoin="round"/><rect x="201.4" y="457.4" width="1.5" height="3.2" fill="#b9b9b9"/><rect x="203.7" y="457.4" width="1.5" height="3.2" fill="#b9b9b9"/><path d="M201.2,459 L205.4,459" stroke="#e9e9e9" stroke-width="0.5"/></svg>
<div class="t" style="left:31.80px;top:383px;font-size:7.5px;letter-spacing:-0.033px;color:#1a1a1a;">Удалить выбранный тип</div>
<div class="abs" style="left:282.5px;top:240px;width:207.0px;height:118px;border:1px solid #b1b6bc;border-radius:1.5px;box-sizing:border-box;box-shadow:inset 1px 1px 0 #fff,1px 1px 0 #fff"></div>
<div class="abs" style="left:288px;top:238px;width:113px;height:5px;background:#f2f6fb"></div>
<div class="t" style="left:290.00px;top:237px;font-size:7.5px;letter-spacing:-0.035px;color:#222;">Добавить новый тип документа</div>
<div class="t" style="left:290.00px;top:253px;font-size:7.5px;letter-spacing:-0.258px;color:#222;">Наименование:</div>
<div class="inp" style="left:290px;top:263.4px;width:159.6px;height:13px"></div>
<div class="t" style="left:290.00px;top:285px;font-size:7.5px;letter-spacing:-0.050px;color:#222;">Индекс:</div>
<div class="inp" style="left:290px;top:295.4px;width:32.4px;height:13px"></div>
<div class="inp" style="left:291px;top:317.4px;width:7.5px;height:7.8px"></div>
<div class="t" style="left:302.00px;top:317px;font-size:7.5px;letter-spacing:-0.137px;color:#222;">Прибавлять к рабочему времени</div>
<div class="btn" style="left:290px;top:335.4px;width:88.8px;height:16px"></div>
<svg class="abs" style="left:311.00px;top:338.00px" width="12" height="11" viewBox="491 408 12 11"><path d="M495.4,409.3 L497.6,409.3 L497.6,412.3 L500.6,412.3 L500.6,414.5 L497.6,414.5 L497.6,417.5 L495.4,417.5 L495.4,414.5 L492.4,414.5 L492.4,412.3 L495.4,412.3 Z" fill="#5cc768" stroke="#2b7d3d" stroke-width="0.8" stroke-linejoin="round"/><path d="M496.1,410.2 L496.1,413.0 L493.3,413.0" stroke="#b4efb4" stroke-width="0.6" fill="none"/></svg>
<div class="t" style="left:325.40px;top:338px;font-size:7.5px;letter-spacing:-0.021px;color:#1a1a1a;">Добавить</div>
<div class="abs" style="left:639px;top:0;width:1px;height:404px;background:#d4d5da"></div>
<div class="abs" style="left:640px;top:0;width:1px;height:404px;background:#7e7e82"></div>
<div class="abs" style="left:0;top:0;width:1px;height:404px;background:#aab2b6"></div>
</div>
<div id="status">
<svg class="abs" style="left:3.00px;top:2.00px" width="11" height="12" viewBox="62 476 11 12"><circle cx="67.5" cy="482" r="4.2" fill="#fbfbfb" stroke="#7a7a7a" stroke-width="0.9"/><path d="M67.5,479.4 L67.5,482.2 L69.6,482.2" stroke="#555" stroke-width="0.8" fill="none"/></svg>
<div class="t" style="left:17.60px;top:4px;font-size:7.5px;letter-spacing:-0.114px;color:#222;">12:28:03</div>
<div class="abs" style="left:57.3px;top:3px;width:1px;height:10px;background:#b5b5b5"></div>
<svg class="abs" style="left:63.00px;top:2.00px" width="13" height="12" viewBox="122 476 13 12"><rect x="123.8" y="477.6" width="9" height="9.4" rx="0.8" fill="#f3f1ee" stroke="#9a8f8a" stroke-width="0.7"/><rect x="123.8" y="477.6" width="9" height="2.8" fill="#c8342e"/><path d="M125.4,482.2 L131.4,482.2 M125.4,484 L131.4,484 M125.4,485.6 L131.4,485.6" stroke="#a8a09a" stroke-width="0.7"/><path d="M126.2,476.8 L126.2,478.6 M130.4,476.8 L130.4,478.6" stroke="#7a6a66" stroke-width="0.8"/></svg>
<div class="t" style="left:77.60px;top:4px;font-size:7.5px;letter-spacing:-0.017px;color:#222;">06.03.2013</div>
<div class="abs" style="left:125.5px;top:3px;width:1px;height:10px;background:#b5b5b5"></div>
<svg class="abs" style="left:131.00px;top:2.00px" width="13" height="12" viewBox="190 476 13 12"><path d="M191,487 Q191,482.4 196,482.4 Q201.2,482.4 201.2,487 Z" fill="#5aa2d2" stroke="#2f6f9e" stroke-width="0.6"/><path d="M194.6,483 L196.1,486.4 L197.6,483 Z" fill="#eaf4fb"/><circle cx="196.1" cy="480" r="2.5" fill="#3a342e"/><ellipse cx="196.1" cy="480.8" rx="1.6" ry="1.7" fill="#e6b98a"/></svg>
<div class="t" style="left:146.00px;top:4px;font-size:7.5px;color:#222;">1</div>
<div class="t" style="left:684.50px;top:4px;font-size:7.5px;letter-spacing:-0.050px;color:#222;">1.76.815 сборка 859</div>
<div class="abs" style="left:761px;top:-1px;width:1px;height:17px;background:#7a8089"></div>
<div class="abs" style="left:0;top:-1px;width:1px;height:17px;background:#8a929c"></div>
</div>
</div>
</body>
</html>
